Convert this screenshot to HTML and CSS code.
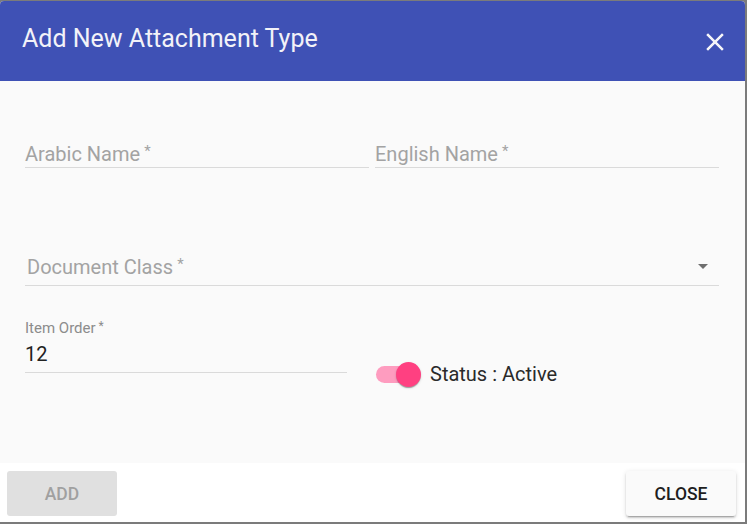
FILE: index.html
```html
<!DOCTYPE html>
<html>
<head>
<meta charset="utf-8">
<link rel="stylesheet" href="styles.css">
</head>
<body>
<div class="dialog">
  <header class="dialog-header">
    <h1 class="dialog-title">Add New Attachment Type</h1>
    <button class="icon-btn" aria-label="Close">
      <svg viewBox="0 0 24 24" width="30" height="30"><path fill="currentColor" d="M19 6.41 17.59 5 12 10.59 6.41 5 5 6.41 10.59 12 5 17.59 6.41 19 12 13.41 17.59 19 19 17.59 13.41 12z"/></svg>
    </button>
  </header>
  <main class="dialog-body">
    <div class="row row-names">
      <div class="field half"><span class="placeholder">Arabic Name<span class="req">*</span></span></div>
      <div class="field half"><span class="placeholder">English Name<span class="req">*</span></span></div>
    </div>
    <div class="field select">
      <span class="placeholder">Document Class<span class="req">*</span></span>
      <span class="arrow"></span>
    </div>
    <div class="row row-order">
      <div class="order">
        <div class="float-label">Item Order<span class="req">*</span></div>
        <div class="field value-field"><span class="value">12</span></div>
      </div>
      <div class="toggle-wrap">
        <span class="toggle"><span class="track"></span><span class="thumb"></span></span>
        <span class="toggle-label">Status : Active</span>
      </div>
    </div>
  </main>
  <footer class="dialog-actions">
    <button class="btn btn-disabled">ADD</button>
    <button class="btn btn-raised">CLOSE</button>
  </footer>
</div>
</body>
</html>
```

FILE: styles.css
```css
* { box-sizing: border-box; }
html, body { margin: 0; padding: 0; }
body {
  background: #7b7b7b;
  font-family: Roboto, "Noto Sans", sans-serif;
  width: 747px;
  height: 524px;
  overflow: hidden;
}
.dialog {
  margin: 1px 2px 0 0;
  width: 745px;
  height: 521px;
  border-radius: 4px 4px 0 0;
  overflow: hidden;
  background: #fafafa;
  display: flex;
  flex-direction: column;
}
.dialog-header {
  height: 80px;
  flex: none;
  background: #3f51b5;
  display: flex;
  align-items: flex-start;
  justify-content: space-between;
  padding: 0 15px 0 22px;
}
.dialog-title {
  margin: 22px 0 0 0;
  font-size: 25px;
  line-height: 32px;
  font-weight: 400;
  color: #f2f2f8;
}
.icon-btn {
  margin-top: 26px;
  padding: 0;
  border: 0;
  background: transparent;
  color: #f4f4f8;
  width: 30px;
  height: 30px;
  display: flex;
}
.dialog-body {
  height: 382px;
  flex: none;
  padding: 60px 26px 0 25px;
  display: flex;
  flex-direction: column;
}
.row { display: flex; }
.row-names { gap: 6px; }
.field {
  border-bottom: 1px solid #dadada;
  font-size: 20px;
  line-height: 26px;
  height: 27px;
  position: relative;
}
.half { flex: 1; }
.placeholder { color: #a3a3a3; }
.req {
  font-size: 15px;
  line-height: 1;
  position: relative;
  top: -5px;
  margin-left: 4px;
}
.select {
  margin-top: 86px;
  height: 32px;
  padding-bottom: 5px;
  padding-left: 2px;
}
.arrow {
  position: absolute;
  right: 11px;
  top: 10px;
  width: 0;
  height: 0;
  border-left: 5px solid transparent;
  border-right: 5px solid transparent;
  border-top: 5px solid #6e6e6e;
}
.row-order { margin-top: 33px; }
.order { width: 322px; }
.float-label {
  font-size: 15px;
  line-height: 18px;
  height: 18px;
  color: #8c8c8c;
  margin-bottom: 4px;
}
.float-label .req { font-size: 12px; top: -3px; margin-left: 3px; }
.value-field { height: 32px; padding-bottom: 5px; }
.value { color: #222; }
.toggle-wrap {
  margin: 43px 0 0 29px;
  display: flex;
  align-items: center;
  height: 25px;
}
.toggle {
  position: relative;
  width: 45px;
  height: 25px;
  display: block;
}
.track {
  position: absolute;
  left: 0;
  top: 4px;
  width: 43px;
  height: 17px;
  border-radius: 9px;
  background: #fe9cbf;
}
.thumb {
  position: absolute;
  left: 20px;
  top: 0;
  width: 25px;
  height: 25px;
  border-radius: 50%;
  background: #ff4081;
  box-shadow: 0 2px 1px -1px rgba(0,0,0,.2), 0 1px 1px 0 rgba(0,0,0,.14), 0 1px 3px 0 rgba(0,0,0,.12);
}
.toggle-label {
  margin-left: 9px;
  font-size: 20px;
  line-height: 25px;
  color: #2a2a2a;
}
.dialog-actions {
  flex: 1;
  background: #fff;
  display: flex;
  justify-content: space-between;
  padding: 8px 9px 0 7px;
}
.btn {
  width: 110px;
  height: 45px;
  border: 0;
  border-radius: 3px;
  font-family: Roboto, sans-serif;
  font-size: 17.5px;
  font-weight: 500;
  padding: 0;
}
.btn-disabled {
  background: #e0e0e0;
  color: #a0a0a0;
}
.btn-raised {
  background: #fafafa;
  color: #1e1e1e;
  box-shadow: 0 3px 1px -2px rgba(0,0,0,.2), 0 2px 2px 0 rgba(0,0,0,.14), 0 1px 5px 0 rgba(0,0,0,.12);
}
```
